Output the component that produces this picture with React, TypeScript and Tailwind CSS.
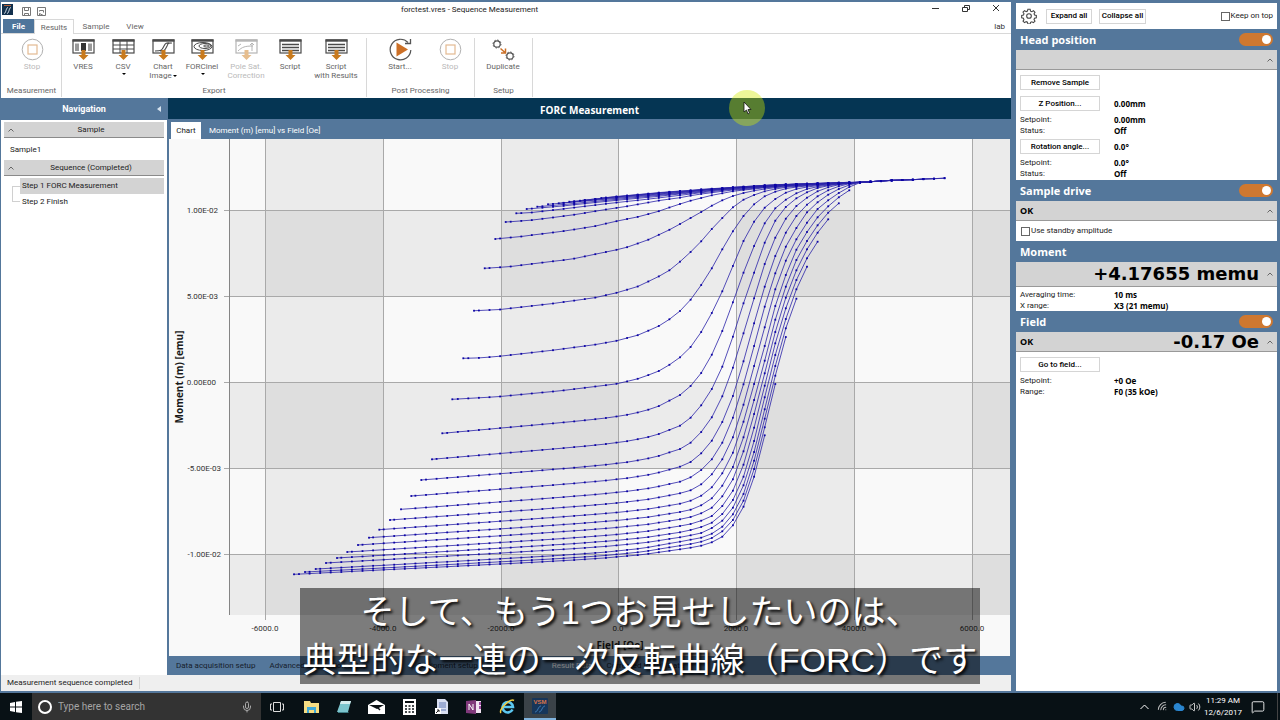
import React from 'react';
import { Cloud, MessageSquare, Mic, Volume2, Wifi } from 'lucide-react';

// start: where the curve begins, rise: readings from the steep part on.
type Forc = { start: [number, number]; slope?: number; lead?: [number, number][]; rise: number[] };

const STEP = 31.75;

const curves: Forc[] = [
  { start: [-1158, 1273], slope: 0.05, rise: [1198, 1193, 1187, 1177, 1160, 1126, 1070, 980, 856] },
  { start: [-1125, 1266], slope: 0.052, rise: [1187, 1182, 1175, 1164, 1144, 1110, 1052, 957, 832, 702] },
  { start: [-1093, 1257], slope: 0.055, rise: [1175, 1169, 1163, 1151, 1130, 1093, 1032, 932, 806, 677, 561] },
  { start: [-1062, 1239], slope: 0.057, rise: [1162, 1156, 1149, 1134, 1112, 1073, 1006, 906, 778, 648, 535, 446] },
  { start: [-1029, 1224], slope: 0.06, rise: [1147, 1140, 1131, 1118, 1092, 1050, 980, 873, 742, 615, 507, 418, 350] },
  { start: [-998, 1206], slope: 0.062, rise: [1128, 1122, 1112, 1098, 1068, 1022, 944, 833, 707, 580, 475, 390, 325, 275] },
  { start: [-966, 1185], slope: 0.065, rise: [1108, 1101, 1090, 1073, 1039, 988, 904, 792, 670, 546, 443, 361, 298, 248, 208] },
  { start: [-933, 1163], slope: 0.067, rise: [1086, 1079, 1066, 1045, 1007, 951, 862, 750, 632, 509, 410, 330, 273, 226, 188, 160] },
  { start: [-902, 1139], slope: 0.07, rise: [1061, 1052, 1037, 1012, 970, 908, 815, 702, 588, 468, 375, 299, 246, 202, 169, 142, 121] },
  { start: [-870, 1110], slope: 0.072, rise: [1030, 1021, 1003, 973, 928, 862, 764, 648, 532, 418, 332, 268, 218, 177, 151, 129, 111, 98, 96] },
  { start: [-837, 1078], slope: 0.075, rise: [995, 982, 960, 928, 878, 803, 703, 588, 470, 370, 290, 234, 187, 157, 134, 117, 105, 97, 95, 94] },
  { start: [-806, 1038], slope: 0.077, rise: [950, 936, 910, 872, 816, 738, 634, 520, 410, 318, 248, 198, 164, 139, 121, 109, 101, 97, 95, 93, 92] },
  { start: [-776, 990], slope: 0.08, rise: [897, 878, 846, 802, 739, 653, 550, 445, 342, 263, 206, 168, 143, 124, 112, 104, 100, 97, 95, 93, 91, 90] },
  { start: [-744, 928], slope: 0.085, rise: [827, 803, 766, 717, 650, 560, 460, 368, 278, 212, 171, 145, 127, 114, 107, 103, 100, 97, 95, 93, 91, 90, 89] },
  { start: [-713, 850], slope: 0.09, rise: [735, 708, 669, 614, 543, 457, 368, 288, 220, 175, 149, 130, 117, 110, 105, 102, 99, 97, 95, 93, 91, 90, 89, 88] },
  {
    start: [-683, 748],
    lead: [[-545, 740], [-355, 722], [-193, 702], [-132, 688], [-69, 666], [-37, 648]],
    rise: [622, 591, 546, 489, 424, 348, 273, 215, 173, 147, 128, 117, 111, 107, 104, 101, 99, 97, 95, 93, 91, 90, 89, 87, 86],
  },
  {
    start: [-650, 625],
    lead: [[-608, 624], [-543, 619], [-385, 601], [-255, 584], [-193, 573], [-128, 556], [-65, 529], [-33, 509]],
    rise: [483, 449, 405, 355, 298, 244, 198, 163, 139, 125, 116, 111, 108, 105, 102, 100, 98, 97, 95, 93, 91, 90, 89, 87, 86, 85],
  },
  {
    start: [-618, 482],
    lead: [[-543, 479], [-385, 461], [-255, 443], [-185, 427], [-128, 410], [-65, 380], [-33, 362]],
    rise: [335, 306, 274, 237, 204, 172, 149, 135, 124, 117, 112, 109, 106, 103, 101, 99, 98, 97, 95, 93, 91, 90, 89, 87, 86, 84],
  },
  {
    start: [-586, 355],
    lead: [[-513, 350], [-323, 327], [-193, 300], [-160, 292], [-97, 270], [-33, 240]],
    rise: [222, 204, 186, 167, 151, 138, 129, 122, 117, 113, 110, 107, 105, 103, 101, 99, 98, 97, 95, 93, 91],
  },
  {
    start: [-554, 267],
    lead: [[-481, 260], [-353, 244], [-257, 229], [-193, 214], [-128, 201], [-65, 184], [-33, 173]],
    rise: [162, 152, 144, 136, 130, 124, 120, 117, 113, 111, 108, 106, 104, 102, 100, 99, 98, 97, 95, 93],
  },
  { start: [-523, 216], lead: [[-449, 211], [-323, 195], [-225, 179], [-160, 169], [-65, 152]], rise: [143, 137, 132, 128, 124, 120, 118, 115, 112, 110, 107, 105, 103, 102, 100, 99, 98, 96] },
  { start: [-491, 190], lead: [[-449, 188], [-353, 177], [-193, 158], [-65, 144]], rise: [136, 132, 128, 125, 121, 118, 116, 113, 111, 109, 106, 104, 103, 101, 100, 98, 97, 96] },
  { start: [-460, 177], lead: [[-353, 168], [-193, 151], [-65, 139]], rise: [132, 129, 126, 122, 119, 117, 114, 112, 110, 108, 106, 104, 102, 101, 99, 98, 97] },
  { start: [-428, 170], lead: [[-353, 164], [-193, 148], [-65, 136]], rise: [130, 127, 124, 121, 118, 115, 113, 111, 109, 107, 105, 103, 102, 100, 99, 98] },
  { start: [-396, 163], lead: [[-353, 159], [-193, 145], [-65, 134]], rise: [128, 125, 122, 119, 117, 114, 112, 110, 108, 106, 105, 103, 101, 100, 99] },
  { start: [-364, 160], lead: [[-193, 143], [-65, 132]], rise: [127, 124, 121, 118, 116, 113, 112, 109, 108, 106, 104, 102, 101, 100] },
  { start: [-332, 155], lead: [[-193, 141], [-65, 130]], rise: [125, 123, 120, 117, 115, 113, 111, 109, 107, 105, 104, 102, 101] },
  { start: [-300, 152], lead: [[-193, 140], [-65, 129]], rise: [124, 122, 119, 117, 115, 112, 110, 108, 106, 105, 103, 102] },
  { start: [-236, 144], lead: [[-65, 128]], rise: [123, 121, 118, 116, 114, 112, 110, 108, 106, 104, 103] },
];

function knots({ start, slope, lead, rise }: Forc): [number, number][] {
  const left: [number, number][] = [start];
  if (lead) {
    left.push(...lead);
  } else {
    const length = -start[0];
    const linear = (slope ?? 0) * length;
    const rest = start[1] - rise[0] - linear;
    for (let t = 0.1; t < 0.97; t += 0.1) {
      left.push([start[0] + length * t, start[1] - linear * t - rest * t ** 9]);
    }
  }
  return [...left, ...rise.map((y, i): [number, number] => [i * STEP, y])];
}

// resample at the field step, from the last reading back, so that the markers are evenly spaced
function sample(points: [number, number][]): [number, number][] {
  const out: [number, number][] = [];
  const [firstX, firstY] = points[0];
  let i = points.length - 2;
  for (let x = points[points.length - 1][0]; x > firstX + 12; x -= STEP) {
    while (i > 0 && points[i][0] > x) i--;
    const [x0, y0] = points[i];
    const [x1, y1] = points[i + 1];
    const y = y0 + ((y1 - y0) * (x - x0)) / (x1 - x0);
    out.push([511 + x / 3, 11 + y / 3]);
  }
  out.push([511 + firstX / 3, 11 + firstY / 3]);
  return out;
}

const series = curves.map((c) => sample(knots(c)));

const gridX = [96, 214, 332, 449, 567, 685, 803];
const gridY = [71, 157, 243, 329, 415];
const xLabels = ['-6000.0', '-4000.0', '-2000.0', '0.0', '2000.0', '4000.0', '6000.0'];
const yLabels = [
  { text: '1.00E-02', x: 49 },
  { text: '5.00E-03', x: 49 },
  { text: '0.00E00', x: 47 },
  { text: '-5.00E-03', x: 52 },
  { text: '-1.00E-02', x: 52 },
];

function ForcChart() {
  return (
    <svg viewBox="0 0 841 517" className="block w-full h-full" preserveAspectRatio="none" role="img" aria-label="Moment vs Field">
      <rect width="841" height="517" fill="#f9f9f9" />
      <g fill="#000" fillOpacity="0.055">
        <rect x="96" y="0" width="118" height="476" />
        <rect x="332" y="0" width="117" height="476" />
        <rect x="567" y="0" width="118" height="476" />
        <rect x="803" y="0" width="38" height="476" />
        <rect x="61" y="71" width="780" height="86" />
        <rect x="61" y="243" width="780" height="86" />
        <rect x="61" y="415" width="780" height="61" />
      </g>
      <g stroke="#a9a9a9">
        {gridX.map((x) => <line key={x} x1={x + 0.5} x2={x + 0.5} y1="0" y2="481" />)}
        {gridY.map((y) => <line key={y} x1="55" x2="841" y1={y + 0.5} y2={y + 0.5} />)}
      </g>
      <line x1="60.5" x2="60.5" y1="0" y2="476" stroke="#858585" />
      <g fill="none" stroke="#2a22a8" strokeWidth="0.8">
        {series.map((pts, i) => (
          <polyline key={i} points={pts.map(([x, y]) => `${x.toFixed(1)},${y.toFixed(1)}`).join(' ')} />
        ))}
      </g>
      <g fill="#0d05a6">
        {series.map((pts, i) => pts.map(([x, y], j) => (
          <rect key={`${i}-${j}`} x={(x - 0.9).toFixed(1)} y={(y - 0.9).toFixed(1)} width="1.8" height="1.8" />
        )))}
      </g>
      <g fontSize="8" fill="#333" fontFamily="Roboto, sans-serif">
        {gridX.map((x, i) => <text key={x} x={x} y="492" textAnchor="middle">{xLabels[i]}</text>)}
        {gridY.map((y, i) => (
          <text key={y} x={yLabels[i].x} y={y + 3} textAnchor="end">{yLabels[i].text}</text>
        ))}
      </g>
      <g fontSize="10" fontWeight="700" fill="#1a1a1a" fontFamily="'Open Sans', sans-serif" textAnchor="middle">
        <text transform="translate(14 238) rotate(-90)">Moment (m) [emu]</text>
        <text x="451" y="510">Field [Oe]</text>
      </g>
    </svg>
  );
}

function DownArrow({ color = '#c87a1e' }: { color?: string }) {
  return <path d="M9.5 12h4v5h3l-5 5-5-5h3z" fill={color} stroke="none" />;
}

function ExportIcon({ kind }: { kind: 'vres' | 'csv' | 'chart' | 'forc' | 'pole' | 'script' }) {
  const ink = kind === 'pole' ? '#b5b5b5' : '#4a4a4a';
  return (
    <svg width="23" height="23" viewBox="0 0 23 23" fill="none" stroke={ink} aria-hidden="true">
      <rect x="1" y="2" width="21" height="13" strokeWidth="1.2" />
      <path d="M0.5 2.5h22" strokeWidth="2.4" />
      {kind === 'vres' && (
        <g stroke="none">
          <rect x="3" y="5.500" width="4" height="7.500" fill="#999" />
          <rect x="9" y="5" width="5" height="8" fill="#333" />
          <rect x="16" y="5.500" width="4" height="7.500" fill="#999" />
        </g>
      )}
      {kind === 'csv' && <path d="M1 7h21M1 11h21M8 3v12M15 3v12" />}
      {kind === 'chart' && <path d="M3 13c7 0 7-1 9-5s3-3 7-3M8 13c5 0 5-1 7-5 1-3 2-3 5-3" strokeWidth="1.1" />}
      {kind === 'forc' && (
        <g>
          <ellipse cx="12" cy="8.500" rx="9" ry="4" />
          <ellipse cx="14" cy="8" rx="6" ry="2.500" />
          <ellipse cx="15.500" cy="8" rx="3" ry="1" />
        </g>
      )}
      {kind === 'pole' && <path d="M3 13c4-4 7-5 15-5M3 8l3-2M17 13V5M15 7l2-2 2 2" />}
      {kind === 'script' && <path d="M3 6.500h17M3 9.500h17M3 12.500h17" strokeWidth="1.4" />}
      <DownArrow color={kind === 'pole' ? '#e6bd8d' : '#c87a1e'} />
    </svg>
  );
}

function StopIcon() {
  return (
    <svg width="23" height="23" viewBox="0 0 23 23" fill="none" aria-hidden="true">
      <circle cx="11.500" cy="11.500" r="10.300" stroke="#b0b0b0" />
      <rect x="7" y="7" width="9" height="9" stroke="#e3ba92" strokeWidth="1.2" />
    </svg>
  );
}

function StartIcon() {
  return (
    <svg width="23" height="23" viewBox="0 0 23 23" fill="none" aria-hidden="true">
      <path d="M19 4.500A10.300 10.300 0 1 0 21.800 12" stroke="#555" strokeWidth="1.2" />
      <path d="M16 5.500h5.500V1" stroke="#555" strokeWidth="1.3" />
      <path d="M7.500 4.500 19 11.500 7.500 18.500z" fill="#cc7027" />
    </svg>
  );
}

function DuplicateIcon() {
  return (
    <svg width="23" height="23" viewBox="0 0 23 23" fill="none" aria-hidden="true">
      <g stroke="#555">
        <circle cx="5" cy="6" r="3.200" strokeWidth="1.2" />
        <circle cx="5" cy="6" r="4" strokeDasharray="1.500 1.600" />
        <circle cx="18" cy="18" r="3.200" strokeWidth="1.2" />
        <circle cx="18" cy="18" r="4" strokeDasharray="1.500 1.600" />
      </g>
      <path d="M8.500 10.500 13 14.500M13.500 10.500v4.500H9" stroke="#cc7027" strokeWidth="1.5" />
    </svg>
  );
}

type RibbonItem = { lines: string[]; icon: React.ReactNode; width: string; menu?: boolean; off?: boolean };

const ribbon: { name: string; width: string; inset: string; items: RibbonItem[] }[] = [
  { name: 'Measurement', width: 'w-[60px]', inset: 'pl-0.5', items: [{ lines: ['Stop'], icon: <StopIcon />, width: 'w-14', off: true }] },
  {
    name: 'Export',
    width: 'w-[305px]',
    inset: 'pl-px',
    items: [
      { lines: ['VRES'], icon: <ExportIcon kind="vres" />, width: 'w-10' },
      { lines: ['CSV'], icon: <ExportIcon kind="csv" />, width: 'w-10', menu: true },
      { lines: ['Chart', 'Image'], icon: <ExportIcon kind="chart" />, width: 'w-10', menu: true },
      { lines: ['FORCinel'], icon: <ExportIcon kind="forc" />, width: 'w-[38px]', menu: true },
      { lines: ['Pole Sat.', 'Correction'], icon: <ExportIcon kind="pole" />, width: 'w-[50px]', off: true },
      { lines: ['Script'], icon: <ExportIcon kind="script" />, width: 'w-[38px]' },
      { lines: ['Script', 'with Results'], icon: <ExportIcon kind="script" />, width: 'w-[54px]' },
    ],
  },
  {
    name: 'Post Processing',
    width: 'w-[108px]',
    inset: 'pl-2',
    items: [
      { lines: ['Start...'], icon: <StartIcon />, width: 'w-[50px]' },
      { lines: ['Stop'], icon: <StopIcon />, width: 'w-[50px]', off: true },
    ],
  },
  { name: 'Setup', width: 'w-[58px]', inset: '', items: [{ lines: ['Duplicate'], icon: <DuplicateIcon />, width: 'w-14' }] },
];

function Caret() {
  return <span className="inline-block border-x-2 border-t-2 border-x-transparent border-t-black ml-px align-middle" />;
}

function RibbonButton({ item }: { item: RibbonItem }) {
  return (
    <button disabled={item.off} className={`${item.width} shrink-0 flex flex-col items-center text-[#666] disabled:text-[#b9b9b9]`}>
      {item.icon}
      <span className="mt-px leading-[9px] whitespace-nowrap">
        {item.lines[0]}
        {item.menu && !item.lines[1] && <span className="flex justify-center pt-0.5"><Caret /></span>}
        {item.lines[1] && <><br />{item.lines[1]}{item.menu && <Caret />}</>}
      </span>
    </button>
  );
}

function TitleBar() {
  return (
    <header className="bg-white shrink-0">
      <div className="h-[17px] flex items-start pl-px pr-2.5">
        <div className="flex-1 flex items-center gap-2">
          <svg width="11" height="11" viewBox="0 0 11 11" aria-hidden="true">
            <rect width="11" height="11" fill="#12304d" />
            <path d="M2 9.500c2 0 2-6 4-6M5 9.500c2 0 2-6 4-6" stroke="#dfe8f0" fill="none" />
            <path d="M2 1.500h7" stroke="#b4603a" />
          </svg>
          <svg width="11" height="11" viewBox="0 0 11 11" fill="none" stroke="#777" className="mt-1" aria-hidden="true">
            <path d="M1.500 1.500h8v8h-8zM3.500 1.500v3h4v-3M3.500 9.500v-2h4v2" />
          </svg>
          <svg width="11" height="11" viewBox="0 0 11 11" fill="none" stroke="#777" className="mt-1 -ml-1" aria-hidden="true">
            <path d="M1.500 1.500h8v8h-8zM3.500 5.500v-1h4v2M3.500 9.500v-2l4 2" />
          </svg>
        </div>
        <h1 className="pt-0.5 mr-16 text-[8px] leading-3 text-[#222]">forctest.vres - Sequence Measurement</h1>
        <div className="flex-1 flex justify-end items-start gap-5 text-[#333]">
          <button aria-label="Minimize" className="pt-1.5"><svg width="10" height="4" className="block"><path d="M1 .5h7" stroke="currentColor" /></svg></button>
          <button aria-label="Restore" className="pt-0.5">
            <svg width="10" height="9" fill="none" stroke="currentColor" className="block"><path d="M1.500 3.500h5v4h-5zM3.500 3.500v-2h5v4h-2" /></svg>
          </button>
          <button aria-label="Close" className="pt-px">
            <svg width="10" height="10" fill="none" stroke="currentColor" className="block"><path d="M2 2l6 6M8 2l-6 6" /></svg>
          </button>
        </div>
      </div>
      <nav className="h-[15px] flex items-stretch border-b border-[#d8d8d8] leading-4 text-[#666] pl-0.5">
        <button className="w-[31px] bg-[#4f759b] text-white font-bold">File</button>
        <button className="w-10 h-[15px] bg-white border-x border-t border-[#d8d8d8] leading-[15px]">Results</button>
        <button className="w-11">Sample</button>
        <button className="w-[34px]">View</button>
        <span className="ml-auto pr-1.5 text-[#333]">lab</span>
      </nav>
      <div className="h-16 flex pt-1 pb-px pl-px">
        {ribbon.map((group) => (
          <section key={group.name} aria-label={group.name} className={`${group.width} border-r border-[#d8d8d8] flex flex-col justify-between items-center`}>
            <div className={`flex self-start ${group.inset}`}>
              {group.items.map((item) => <RibbonButton key={item.lines.join(' ')} item={item} />)}
            </div>
            <span className="leading-3 text-[#666]">{group.name}</span>
          </section>
        ))}
      </div>
    </header>
  );
}

function Chevron() {
  return (
    <svg width="6" height="4" viewBox="0 0 6 4" fill="none" stroke="#666" aria-hidden="true"><path d="M0.500 3.500 3 1l2.500 2.500" /></svg>
  );
}

function Navigation() {
  return (
    <aside className="w-[166px] shrink-0 flex flex-col bg-white text-[#222]">
      <div className="h-[22px] bg-[#54779b] text-white font-bold text-[9px] flex items-center">
        <span className="flex-1 text-center pl-2.5 pt-0.5">Navigation</span>
        <button aria-label="Collapse navigation" className="pr-1.5">
          <span className="block border-y-3 border-r-4 border-y-transparent border-r-[#d5e2ee]" />
        </button>
      </div>
      <div className="px-[3px] pt-0.5">
        <button className="w-full h-4 bg-[#d3d3d3] border-b border-[#8a8a8a] flex items-center pl-1">
          <Chevron /><span className="flex-1 pl-1">Sample</span>
        </button>
        <p className="h-[22px] pl-1.5 leading-6">Sample1</p>
        <button className="w-full h-4 bg-[#d3d3d3] border-b border-[#8a8a8a] flex items-center pl-1">
          <Chevron /><span className="flex-1 pl-1">Sequence (Completed)</span>
        </button>
        <div className="flex pt-0.5">
          <div className="w-2 ml-2 mt-2 h-4 border-l border-y border-[#d0d0d0]" />
          <ul className="flex-1 leading-4">
            <li className="bg-[#d3d3d3] pl-0.5">Step 1 FORC Measurement</li>
            <li className="pl-0.5">Step 2 Finish</li>
          </ul>
        </div>
      </div>
    </aside>
  );
}

function Toggle({ label }: { label: string }) {
  return (
    <label className="relative w-[34px] h-[13px] rounded-full bg-[#cf7830] flex items-center justify-end pr-0.5">
      <input type="checkbox" defaultChecked aria-label={label} className="absolute inset-0 opacity-0" />
      <span className="size-[9px] rounded-full bg-white" />
    </label>
  );
}

type PanelProps = { title: string; toggle?: boolean; status?: string; value?: string; tall?: boolean; children: React.ReactNode };

function Panel({ title, toggle, status, value, tall, children }: PanelProps) {
  return (
    <section>
      <div className="h-[21px] bg-[#54779b] flex items-center justify-between px-1">
        <h2 className="text-white font-bold text-[11px] leading-5 font-['Open_Sans',sans-serif]">{title}</h2>
        {toggle && <Toggle label={title} />}
      </div>
      <button className={`w-full ${tall ? 'h-[25px]' : 'h-5'} bg-[#d3d3d3] border-b border-[#999] flex items-center px-1 text-black`}>
        <span className="font-bold text-[9px] font-['Open_Sans',sans-serif]">{status}</span>
        <span className="ml-auto mr-2 text-[18px] leading-5 font-bold font-['DejaVu_Sans',sans-serif]">{value}</span>
        <Chevron />
      </button>
      <div className="bg-white px-1 text-[#222]">{children}</div>
    </section>
  );
}

function Row({ label, value }: { label: string; value: string }) {
  return (
    <div className="flex leading-[11px]">
      <dt className="w-[94px]">{label}</dt>
      <dd className="font-bold text-black font-['Open_Sans',sans-serif]">{value}</dd>
    </div>
  );
}

function ActionButton({ children }: { children: React.ReactNode }) {
  return <button className="w-20 h-[15px] border border-[#d5d5d5] bg-white font-medium text-black leading-3">{children}</button>;
}

function InstrumentPanel() {
  return (
    <aside className="w-[261px] shrink-0 mr-[3px] mt-[3px] mb-0.5 bg-white">
      <div className="h-[26px] flex items-center pl-[5px] pr-1">
        <button aria-label="Settings">
          <svg width="16" height="16" viewBox="0 0 24 24" fill="none" stroke="#444" strokeWidth="1.6" className="block">
            <circle cx="12" cy="12" r="3.500" />
            <path d="M10.300 2h3.400l.6 2.700 2 .8 2.400-1.500 2.300 2.400-1.400 2.300.8 2 2.600.6v3.400l-2.700.6-.8 2 1.500 2.400-2.400 2.300-2.300-1.400-2 .8-.6 2.600h-3.400l-.6-2.700-2-.8-2.400 1.500L3 19.700l1.400-2.300-.8-2L1 14.700v-3.400l2.700-.6.8-2L3 6.300 5.400 4l2.300 1.400 2-.8z" />
          </svg>
        </button>
        <button className="w-[46px] h-[15px] ml-[9px] border border-[#d5d5d5] font-medium">Expand all</button>
        <button className="w-[47px] h-[15px] ml-[7px] border border-[#d5d5d5] font-medium whitespace-nowrap">Collapse all</button>
        <label className="ml-auto flex items-center text-[#222]">
          <input type="checkbox" className="appearance-none size-[9px] border border-[#666] mr-px" />Keep on top
        </label>
      </div>
      <Panel title="Head position" toggle>
        <div className="pt-[5px] pb-px">
          <ActionButton>Remove Sample</ActionButton>
          <dl>
            <div className="flex items-center mt-1.5 mb-[3px]">
              <dt className="w-[94px]"><ActionButton>Z Position...</ActionButton></dt>
              <dd className="font-bold text-black font-['Open_Sans',sans-serif]">0.00mm</dd>
            </div>
            <Row label="Setpoint:" value="0.00mm" />
            <Row label="Status:" value="Off" />
            <div className="flex items-center my-[3px]">
              <dt className="w-[94px]"><ActionButton>Rotation angle...</ActionButton></dt>
              <dd className="font-bold text-black font-['Open_Sans',sans-serif]">0.0°</dd>
            </div>
            <Row label="Setpoint:" value="0.0°" />
            <Row label="Status:" value="Off" />
          </dl>
        </div>
      </Panel>
      <Panel title="Sample drive" toggle status="OK">
        <label className="h-5 flex items-center pl-px">
          <input type="checkbox" className="appearance-none size-[9px] border border-[#666] mr-px" />Use standby amplitude
        </label>
      </Panel>
      <Panel title="Moment" value="+4.17655 memu" tall>
        <dl className="pt-0.5">
          <Row label="Averaging time:" value="10 ms" />
          <Row label="X range:" value="X3 (21 memu)" />
        </dl>
      </Panel>
      <Panel title="Field" toggle status="OK" value="-0.17 Oe">
        <div className="pt-[5px]">
          <ActionButton>Go to field...</ActionButton>
          <dl className="pt-[3px]">
            <Row label="Setpoint:" value="+0 Oe" />
            <Row label="Range:" value="F0 (35 kOe)" />
          </dl>
        </div>
      </Panel>
    </aside>
  );
}

function TaskbarApps() {
  return (
    <div className="flex">
      <button aria-label="Task view" className="w-8 flex items-center justify-center">
        <svg width="14" height="12" fill="none" stroke="#ddd"><path d="M3.500 1.500h7v9h-7zM2 3H0.500v6H2M12 3h1.500v6H12" /></svg>
      </button>
      <button aria-label="File Explorer" className="w-9 flex items-center justify-center">
        <svg width="15" height="14"><path d="M0 1h6l1 2h8v10H0z" fill="#f5dc82" /><path d="M3 7h9v6h-2v-3H5v3H3z" fill="#3fa9d8" /></svg>
      </button>
      <button aria-label="Notepad" className="w-[30px] flex items-center justify-center">
        <svg width="16" height="14"><path d="M5 1h10l-3 11H1z" fill="#7cc5cd" /><path d="M5 1h10l-1 3H4z" fill="#d6edee" /><path d="M2 12h10l1 1H2z" fill="#3f7f88" /></svg>
      </button>
      <button aria-label="Mail" className="w-[34px] flex items-center justify-center">
        <svg width="17" height="14"><path d="M0 5 8.500 0 17 5v9H0z" fill="#fff" /><path d="M1 5h15l-7 4z" fill="#0a1014" /><path d="m8 6 4 4" stroke="#0a1014" strokeWidth="1.500" /></svg>
      </button>
      <button aria-label="Calculator" className="w-8 flex items-center justify-center">
        <svg width="13" height="16"><path d="M0 0h13v16H0z" fill="#fff" /><path d="M2 3h9" stroke="#0a1014" strokeWidth="2" /><path d="M2 7h9M2 10h9M2 13h9" stroke="#0a1014" strokeWidth="1.500" strokeDasharray="2 1.500" /></svg>
      </button>
      <button aria-label="Document" className="w-8 flex items-center justify-center">
        <svg width="13" height="16"><path d="M2 0h8l3 3v12H2z" fill="#d9e0f2" /><path d="M4 4h7M4 6h7M4 8h7M6 11h5" stroke="#6078b5" /><path d="M0 9h6v6H0z" fill="#fff" /><path d="m1 14 3-3M2 11h2v2" stroke="#222" fill="none" /></svg>
      </button>
      <button aria-label="OneNote" className="w-[34px] flex items-center justify-center">
        <svg width="16" height="14"><path d="M8 1h7v12H8z" fill="#f0e2f1" /><path d="M13 2h2v3h-2zM13 6h2v3h-2z" fill="#a04da3" /><path d="M0 1 10 0v14L0 13z" fill="#80397b" /><path d="M3 10V4l4 6V4" stroke="#fff" fill="none" /></svg>
      </button>
      <button aria-label="Internet Explorer" className="w-8 flex items-center justify-center">
        <svg width="17" height="16" fill="none"><path d="M13.500 10.500A5.200 5.200 0 1 1 14 8H4" stroke="#5cc8f2" strokeWidth="2.600" /><path d="M2 14C-1 11 11-1 15 1.500" stroke="#f3cd3e" strokeWidth="1.500" /></svg>
      </button>
      <button aria-label="VSM" className="w-8 ml-px bg-[#3a4248] border-b-2 border-[#7fb2dc] flex items-center justify-center">
        <svg width="16" height="16"><rect width="16" height="16" rx="1" fill="#17365a" /><text x="8" y="6" fontSize="6" fontWeight="700" fill="#d9744a" textAnchor="middle" fontFamily="'Liberation Sans', sans-serif">VSM</text><path d="M3 14c3 0 3-6 6-6M7 14c3 0 3-6 6-6" stroke="#3c7ab5" fill="none" /></svg>
      </button>
    </div>
  );
}

function Taskbar() {
  return (
    <footer className="h-[27px] shrink-0 bg-[#081115] flex text-white">
      <button aria-label="Start" className="w-8 flex items-center justify-center">
        <svg width="12" height="12" fill="#fff"><path d="M0 2l5-1v4.500H0zM6 .8 12 0v5.500H6zM0 6.500h5V11l-5-1zM6 6.500h6V12l-6-.8z" /></svg>
      </button>
      <label className="w-[229px] bg-[#333] flex items-center pl-1.5 pr-2">
        <span className="size-3.5 rounded-full border-2 border-white mr-1.5" />
        <input aria-label="Search" placeholder="Type here to search" className="flex-1 min-w-0 bg-transparent text-[10px] placeholder:text-[#a5a5a5] outline-none" />
        <Mic className="size-3 text-[#aaa]" />
      </label>
      <TaskbarApps />
      <div className="ml-auto flex items-center gap-1">
        <svg width="9" height="6" fill="none" stroke="#fff" className="mr-1"><path d="M.5 5 4.500 1l4 4" /></svg>
        <Wifi className="size-3 -rotate-45 text-[#bbb]" />
        <Cloud className="size-3 text-[#2a86d0] fill-[#2a86d0]" />
        <Volume2 className="size-3 text-[#ccc]" />
        <div className="w-9 flex flex-col items-center whitespace-nowrap leading-3"><span>11:29 AM</span><span>12/6/2017</span></div>
        <MessageSquare className="size-3.5 ml-1.5 mr-2" strokeWidth={1.5} />
        <span className="h-full border-l border-[#444] pr-0.5" />
      </div>
    </footer>
  );
}

export default function App() {
  return (
    <div className="relative h-screen overflow-hidden flex flex-col bg-[#54779b] text-[8px] font-['Roboto',sans-serif]">
      <div className="flex-1 min-h-0 flex">
        <div className="flex-1 min-w-0 flex flex-col mt-0.5 ml-px mr-[5px] mb-0.5">
          <TitleBar />
          <div className="flex-1 min-h-0 flex">
            <Navigation />
            <main className="flex-1 min-w-0 flex flex-col">
              <h2 className="h-[21px] shrink-0 bg-[#053553] ml-px text-white text-[10px] font-bold text-center leading-6 font-['Open_Sans',sans-serif]">FORC Measurement</h2>
              <div className="h-5 shrink-0 pl-1 pt-[3px] flex text-white leading-[17px]">
                <button className="w-[30px] bg-white text-[#222]">Chart</button>
                <button className="px-2">Moment (m) [emu] vs Field [Oe]</button>
              </div>
              <div className="flex-1 min-h-0 pl-0.5 pr-px"><ForcChart /></div>
              <div className="h-[19px] shrink-0 flex items-center gap-3.5 pl-[9px] text-[#16202b] whitespace-nowrap">
                <button>Data acquisition setup</button>
                <button>Advanced acquisition setup</button>
                <button className="ml-9">Equipment setup</button>
                <button className="ml-15 text-white">Result Data</button>
                <button>Corrected Result Data</button>
              </div>
            </main>
          </div>
          <div className="h-4 shrink-0 bg-[#efefef] flex items-center pl-1.5 text-[#222]">
            <span className="border-r border-[#d5d5d5] pr-1.5">Measurement sequence completed</span>
          </div>
        </div>
        <InstrumentPanel />
      </div>
      <Taskbar />

      {/* highlighted mouse pointer */}
      <div className="absolute left-[729px] top-[90px] size-9 rounded-full bg-[#d2eb00]/40 flex items-center justify-center pointer-events-none">
        <svg width="10" height="14" viewBox="0 0 10 14"><path d="M2 1v10l2.500-2 1.500 4 1.500-1-1.500-3.500H9z" fill="#fff" stroke="#111" strokeWidth="0.8" /></svg>
      </div>

      {/* subtitles */}
      <p className="absolute left-1/2 -translate-x-1/2 bottom-9 w-[680px] bg-black/50 text-white text-center text-[34px] leading-[48px] whitespace-nowrap font-['Liberation_Sans','Noto_Sans_CJK_JP',sans-serif] [text-shadow:2px_2px_3px_#000]">
        そして、もう1つお見せしたいのは、<br />典型的な一連の一次反転曲線（FORC）です
      </p>
    </div>
  );
}
